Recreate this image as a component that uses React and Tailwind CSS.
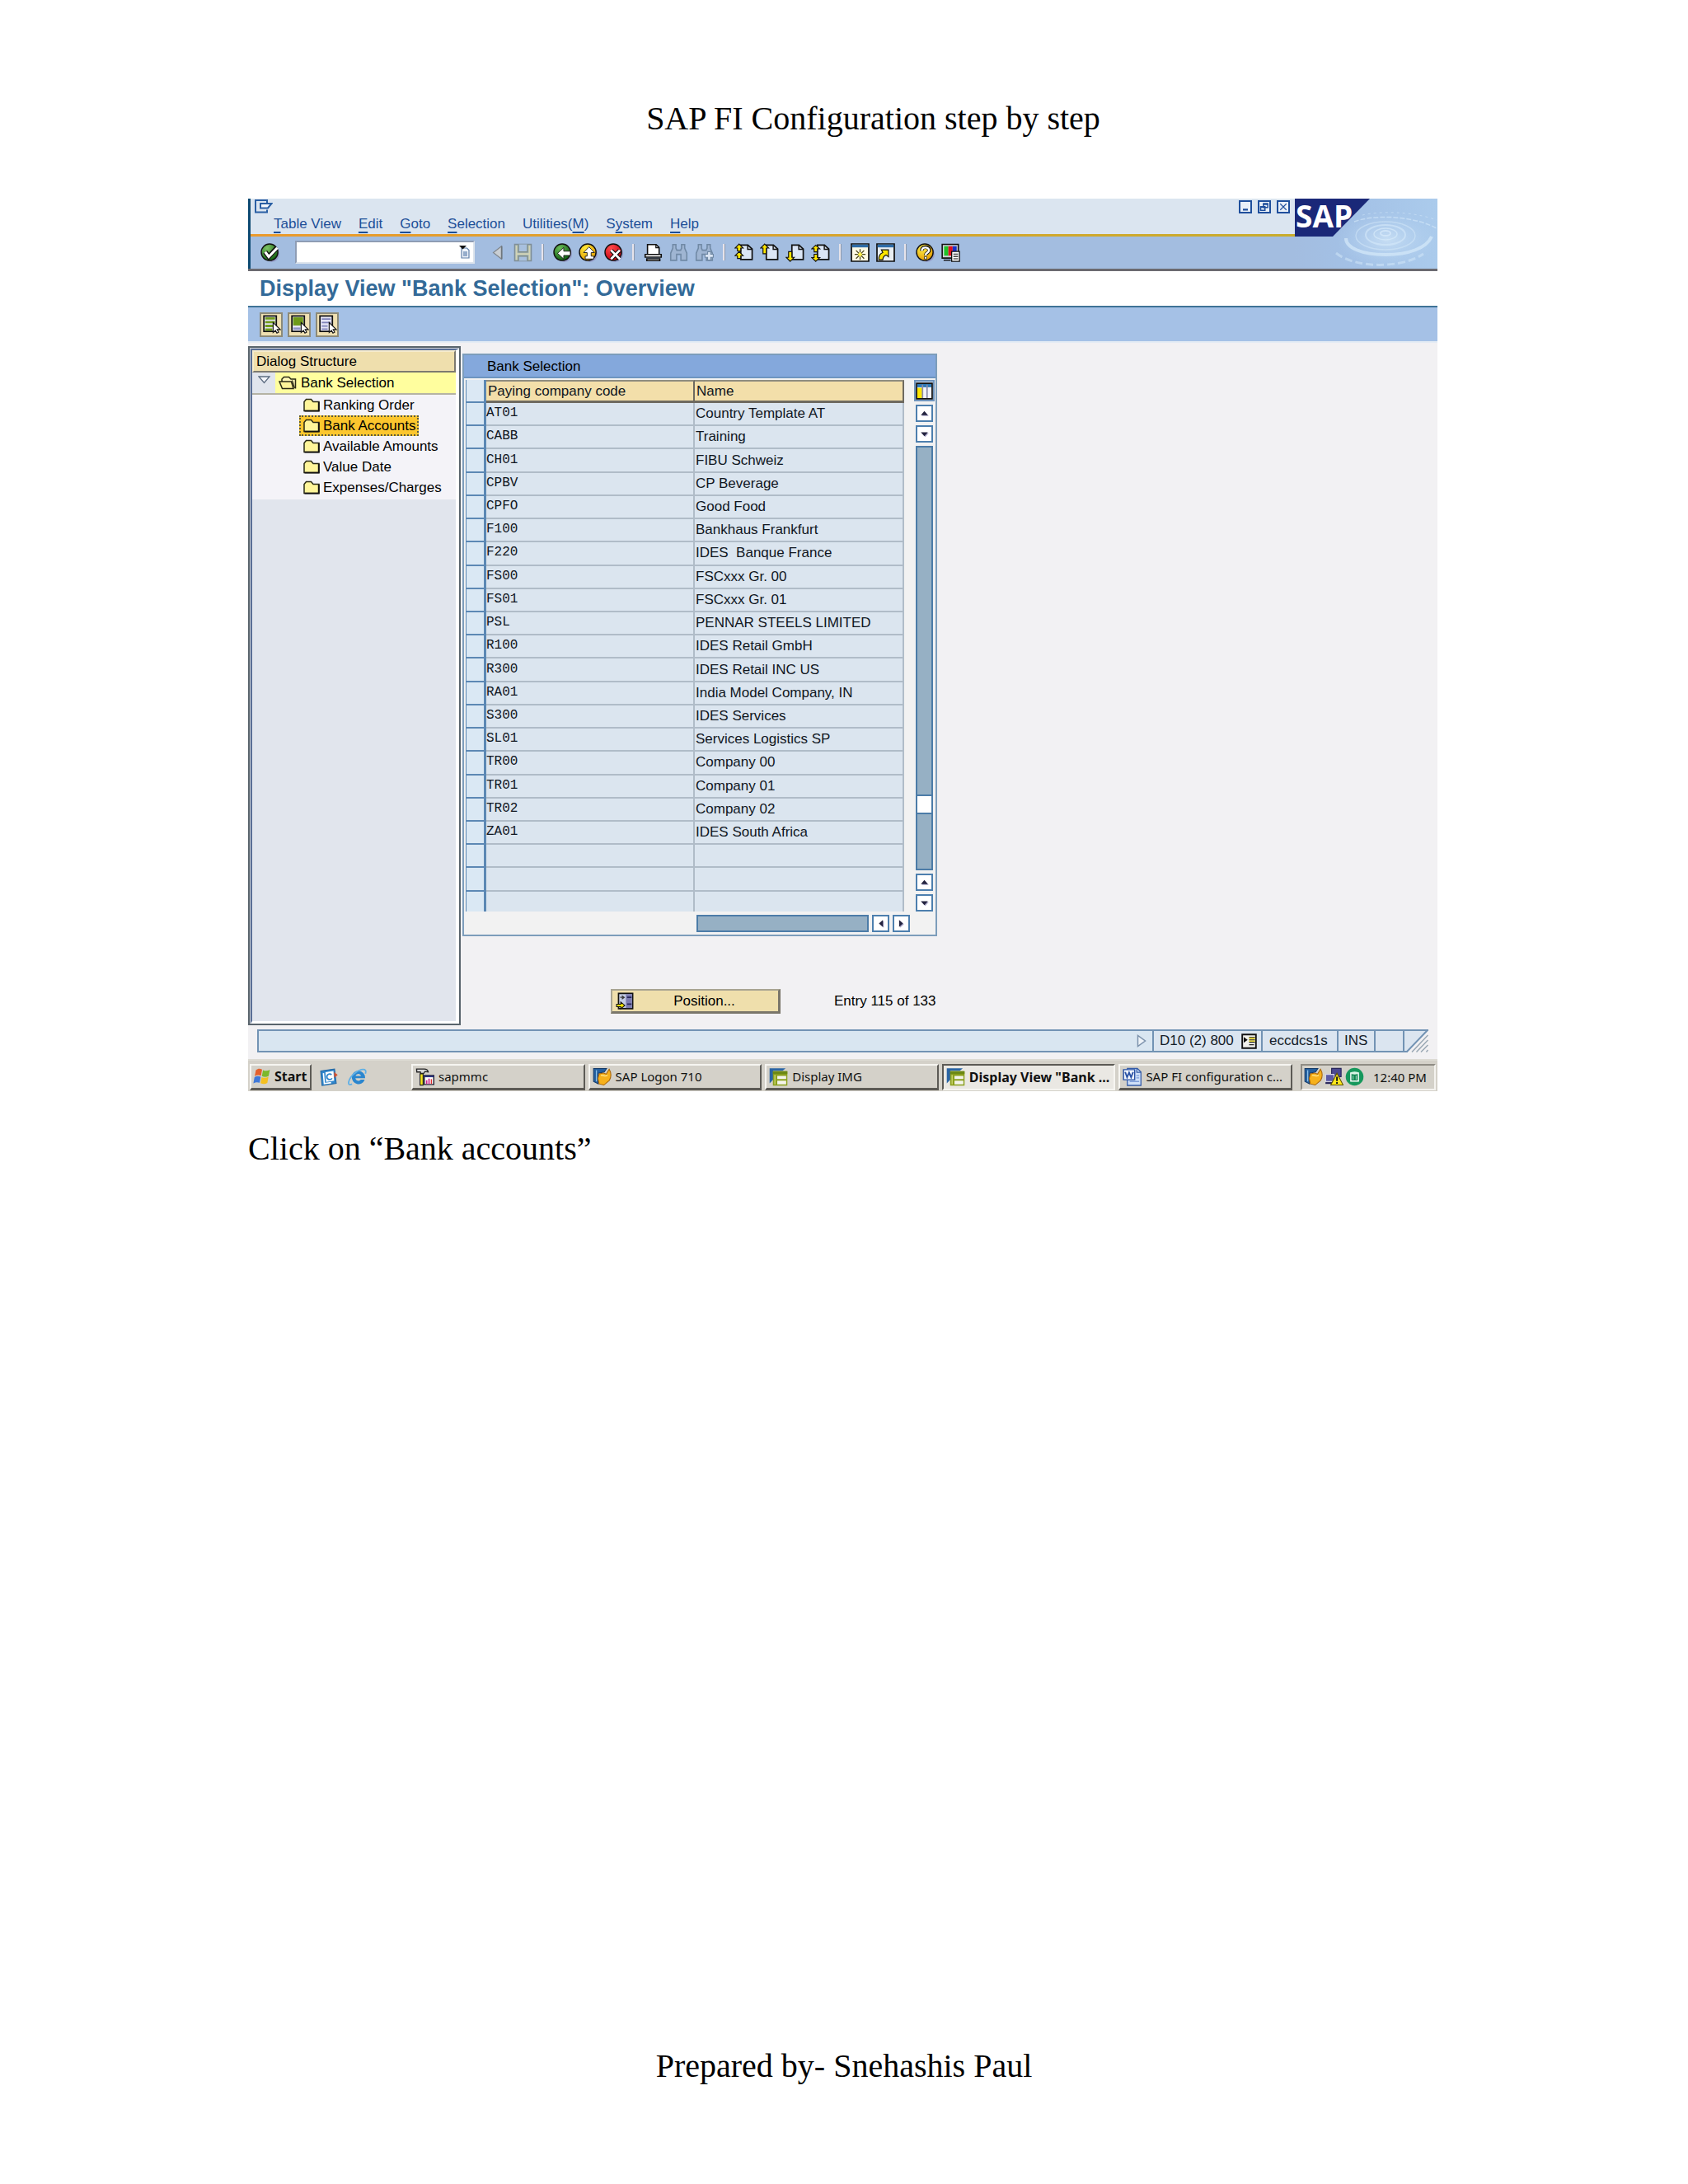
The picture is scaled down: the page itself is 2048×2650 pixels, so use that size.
import clsx from "clsx";

const rows = [
    ["AT01", "Country Template AT"],
    ["CABB", "Training"],
    ["CH01", "FIBU Schweiz"],
    ["CPBV", "CP Beverage"],
    ["CPFO", "Good Food"],
    ["F100", "Bankhaus Frankfurt"],
    ["F220", "IDES  Banque France"],
    ["FS00", "FSCxxx Gr. 00"],
    ["FS01", "FSCxxx Gr. 01"],
    ["PSL", "PENNAR STEELS LIMITED"],
    ["R100", "IDES Retail GmbH"],
    ["R300", "IDES Retail INC US"],
    ["RA01", "India Model Company, IN"],
    ["S300", "IDES Services"],
    ["SL01", "Services Logistics SP"],
    ["TR00", "Company 00"],
    ["TR01", "Company 01"],
    ["TR02", "Company 02"],
    ["ZA01", "IDES South Africa"],
    ["", ""],
    ["", ""],
    ["", ""],
];

// [text before the access key, access key, text after it]
const menus = [
    ["", "T", "able View"],
    ["", "E", "dit"],
    ["", "G", "oto"],
    ["", "S", "election"],
    ["Utilities(", "M", ")"],
    ["S", "y", "stem"],
    ["", "H", "elp"],
];

const treeItems = ["Ranking Order", "Bank Accounts", "Available Amounts", "Value Date", "Expenses/Charges"];

function Icon({ children, className = "size-[23px]" }) {
    return (
        <svg viewBox="0 0 16 16" className={clsx("block shrink-0", className)} fill="none" aria-hidden="true">
            {children}
        </svg>
    );
}

/* ---------- toolbar icons ---------- */

function Ball({ id, light, dark, children }) {
    return (
        <Icon>
            <defs>
                <radialGradient id={id} cx="0.35" cy="0.25" r="0.8">
                    <stop offset="0" stopColor={light} />
                    <stop offset="1" stopColor={dark} />
                </radialGradient>
            </defs>
            <ellipse cx="9.5" cy="9" rx="6.5" ry="7" fill="#8a86b8" opacity="0.6" />
            <circle cx="7.7" cy="7.7" r="7" fill={`url(#${id})`} stroke="#111" strokeWidth="1" />
            {children}
        </Icon>
    );
}

const EnterIcon = () => (
    <Ball id="enter" light="#7fc465" dark="#11600f">
        <path d="M4 7.5 7 11.5 13.5 4.2" stroke="#111" strokeWidth="4" />
        <path d="M4 7.5 7 11.5 14.2 4" stroke="#fff" strokeWidth="2.2" />
    </Ball>
);

const BackIcon = () => (
    <Ball id="back" light="#6bbb58" dark="#0d5c10">
        <path d="M3.8 8.6 9 3.8v3h5.6v3.6H9v3Z" fill="#fff" stroke="#111" strokeWidth="0.6" />
    </Ball>
);

const ExitIcon = () => (
    <Ball id="exit" light="#ffe93a" dark="#e09a00">
        <path d="M8.8 3.2 13.4 8H10.6v3h2.2v2.4H5.6V11h1.6V8H4.2Z" fill="#fff" stroke="#111" strokeWidth="0.6" />
    </Ball>
);

const CancelIcon = () => (
    <Ball id="cancel" light="#ff4a4a" dark="#c40010">
        <path d="M6 6.2 13 13.2M13 6.2 6 13.2" stroke="#111" strokeWidth="3.4" />
        <path d="M5.8 6 13.4 13.6M13.2 6 5.8 13.4" stroke="#fff" strokeWidth="1.9" />
    </Ball>
);

const PlayLeftIcon = () => (
    <Icon>
        <path d="M11.5 2.6v10.8L4.5 8Z" fill="#c9ced3" stroke="#7f868c" strokeWidth="0.8" />
        <path d="M11.6 2.6v10.8" stroke="#6f767c" strokeWidth="1.2" />
    </Icon>
);

const SaveIcon = () => (
    <Icon>
        <path d="M1 1h14v14H1Z" fill="#a9b8b8" stroke="#7f8e96" strokeWidth="1" />
        <path d="M4.2 1v6.5h7.6V1M4.2 15v-4h7.6v4" fill="#a8c0de" stroke="#808e88" strokeWidth="1" />
        <path d="M2.5 2v12M13.5 2v12M3 9.2h10" stroke="#d2d4b4" strokeWidth="1.2" />
    </Icon>
);

const PrintIcon = () => (
    <Icon>
        <path d="M3.2 9.5V1.2h7.3L13 3.7v5.8" fill="#fff" stroke="#111" strokeWidth="1.1" />
        <path d="M10.3 1.2v2.7H13" stroke="#111" strokeWidth="0.9" />
        <path d="M1.2 9.6h13.6v2.2H1.2ZM2.6 13.2h11v1.6h-11Z" fill="#fff" stroke="#111" strokeWidth="1.1" />
    </Icon>
);

const Binoculars = () => (
    <path
        d="M3 1.2h2.6v3L6.4 6h3.2l.8-1.8v-3H13v3l1.8 4.3v6h-5v-5H6.2v5h-5v-6L3 4.2Z"
        fill="#9fb5d2"
        stroke="#7089a5"
        strokeWidth="1.1"
    />
);

const FindIcon = () => (
    <Icon>
        <Binoculars />
    </Icon>
);

const FindNextIcon = () => (
    <Icon>
        <Binoculars />
        <path d="M8.6 9.4h2.2V7.2h2.6v2.2h2.2V12h-2.2v2.3h-2.6V12H8.6Z" fill="#dbe6f4" stroke="#7089a5" strokeWidth="0.8" />
    </Icon>
);

function PageIcon({ arrows }) {
    return (
        <Icon>
            <path d="M5.4 1.6h6L15 5v8.8H5.4Z" fill="#dbe6f6" stroke="#111" strokeWidth="1.2" />
            <path d="M11.2 1.6V5.2H15" stroke="#111" strokeWidth="1" />
            {arrows.map((d) => (
                <path key={d} d={d} fill="#ffe600" stroke="#111" strokeWidth="0.8" />
            ))}
        </Icon>
    );
}

const FirstPageIcon = () => (
    <PageIcon arrows={["M4 .8 7.4 4.2H5.4v2.4H2.6V4.2H.6Z", "M4 7.2 7.4 10.6H5.4V13H2.6v-2.4H.6Z"]} />
);
const PrevPageIcon = () => <PageIcon arrows={["M4 .8 7.4 4.2H5.4v4.8H2.6V4.2H.6Z"]} />;
const NextPageIcon = () => <PageIcon arrows={["M4 15.4 7.4 12H5.4V7.2H2.6V12H.6Z"]} />;
const LastPageIcon = () => (
    <PageIcon arrows={["M4 1.8 7.4 4.8H5.4v2.6H2.6V4.800H.6Z", "M4 15.4 7.4 12.2H5.4V9.4H2.6v2.8H.6Z"]} />
);

const SessionIcon = () => (
    <Icon>
        <path d="M.7.7h14.6v14.6H.7Z" fill="#fdfbe6" stroke="#111" strokeWidth="1.2" />
        <path d="M1.2 1.2h13.6v2.4H1.2Z" fill="#2e6ca8" />
        <path d="M8 5v9M3.4 9.5h9.2M4.6 6.2l6.8 6.8M11.4 6.2l-6.8 6.8" stroke="#4a4618" strokeWidth="0.9" />
        <path d="M8 7.4 10 9.5 8 11.6 6 9.5Z" fill="#fff04a" />
    </Icon>
);

const ShortcutIcon = () => (
    <Icon>
        <path d="M.7.7h14.6v14.6H.7Z" fill="#e9eef2" stroke="#111" strokeWidth="1.2" />
        <path d="M1.2 1.2h13.6v2.4H1.2Z" fill="#2e6ca8" />
        <path d="M2.2 14c0-4 1.4-5.4 3.4-6L4.4 5.6h6v6L8.400 10c-1.800.6-2.600 1.600-2.800 4Z" fill="#ffe600" stroke="#111" strokeWidth="0.8" />
    </Icon>
);

const HelpIcon = () => (
    <Ball id="help" light="#fff04a" dark="#e39a00">
        <path d="M5 6.4C5 2.400 11.400 2.600 11.400 6c0 2.200-3 2.200-3 4.200" stroke="#111" strokeWidth="3" />
        <path d="M5.200 6.400C5.200 2.800 11.200 3 11.200 6c0 2.200-2.900 2.200-2.900 4.200" stroke="#fff" strokeWidth="1.700" />
        <path d="M7.300 11.400h2v2h-2Z" fill="#fff" stroke="#111" strokeWidth="0.500" />
    </Ball>
);

const LayoutIcon = () => (
    <Icon>
        <path d="M.8 1h13.6v11.6H.8Z" fill="#ced3d8" stroke="#111" strokeWidth="1.1" />
        <path d="M2.4 2.6H6v8H2.400Z" fill="#1fc228" />
        <path d="M6 2.6h3.6v8H6Z" fill="#e01020" />
        <path d="M9.6 2.6H13v8H9.600Z" fill="#1830c8" />
        <path d="M2 14.4h6" stroke="#111" strokeWidth="1" />
        <path d="M8.800 7h6.600v8.400H8.800Z" fill="#fff" stroke="#111" strokeWidth="0.9" />
        <path d="M10.200 9.200h4M10.200 11.200h4M10.200 13.200h4" stroke="#111" strokeWidth="0.8" />
    </Icon>
);

/* ---------- application toolbar icons ---------- */

function ListIcon({ variant }) {
    return (
        <Icon>
            <path d="M1.5 1H12v13H1.500Z" fill="#e4e4f4" stroke="#111" strokeWidth="1.2" />
            {variant === "all" && (
                <path d="M2.600 3h8.300M2.600 6.200h8.300M2.600 9.400h8.300M2.600 12.400h6" stroke="#719b1c" strokeWidth="2" />
            )}
            {variant === "block" && (
                <>
                    <path d="M2.500 2H11v7H2.500Z" fill="#6f9a1a" />
                    <path d="M2.600 11.600h6" stroke="#8f92c4" strokeWidth="1.8" />
                </>
            )}
            {variant === "none" && (
                <path d="M3 3.500h7.600M3 6.500h7.600M3 9.500h5M3 12h5" stroke="#7f82b8" strokeWidth="1.2" />
            )}
            <path d="M9.300 6.500v8.400l1.900-1.800 1.300 2.300 1.400-.8-1.200-2.200h2.600Z" fill="#fff" stroke="#111" strokeWidth="0.8" />
        </Icon>
    );
}

const FolderIcon = () => (
    <svg viewBox="0 0 20 17" className="block h-[17px] w-5 shrink-0" aria-hidden="true">
        <path d="M1 15.5V4.500L3.500 1.500h6L12 4.500h7v11Z" fill="#fff59a" stroke="#2a2a14" strokeWidth="1.5" />
        <path d="M18.700 5v10.700H1.500" fill="none" stroke="#111" strokeWidth="1.8" />
    </svg>
);

const OpenFolderIcon = () => (
    <svg viewBox="0 0 22 17" className="block h-[17px] w-[22px] shrink-0" aria-hidden="true">
        <path d="M4 7V4L6.500 1.500h6L15 4h5.500v11.500" fill="#fff9b8" stroke="#2a2a14" strokeWidth="1.5" />
        <path d="M1 7h14.500l2.500 8.500H4.500Z" fill="#fff59a" stroke="#2a2a14" strokeWidth="1.5" />
        <path d="M16.500 5.500 19.500 15" stroke="#2a2a14" strokeWidth="1.2" />
    </svg>
);

/* ---------- taskbar icons ---------- */

const WindowsIcon = () => (
    <Icon className="size-[22px]">
        <path d="M2.500 2.500C4.500 1 6 1 8 2L7 7.400C5.200 6.600 3.500 6.600 1.500 7.800Z" fill="#e4602c" />
        <path d="M8.800 2.500c2 .9 4 .9 6-.3l-1 5.400c-2 1.200-4 1.100-6 .2Z" fill="#7cb82c" />
        <path d="M1.300 8.700c2-1.200 3.700-1.100 5.500-.3L5.800 13.700C4 12.900 2.300 13 .3 14.200Z" fill="#3f78d8" />
        <path d="M7.600 8.700c2 .9 4 .9 6-.3l-1 5.500c-2 1.200-4 1.100-6 .1Z" fill="#f4c020" />
    </Icon>
);

const OutlookIcon = () => (
    <Icon className="size-[22px]">
        <path d="M.8 2.500 13 .8l1.500 12.700L2 15.400Z" fill="#2f86cc" stroke="#2468a4" strokeWidth="0.8" />
        <path d="M5 3.600 12 2.600l.6 8.400-7 1.200Z" fill="#fff" />
        <path d="M10.400 5.800A2.500 2.500 0 1 0 10.800 9" stroke="#2f86cc" strokeWidth="1.3" />
        <path d="M3.200 4.500 4 13.600l6-.8" stroke="#fff" strokeWidth="1.2" />
        <path d="M12.600 3.500 15.800 6l-3 2.500Z" fill="#d8502c" />
    </Icon>
);

const ExplorerIcon = () => (
    <Icon className="size-6">
        <path d="M8.500 2.800a5.400 5.400 0 1 0 5.200 7.200h-3.200a2.500 2.500 0 0 1-4.400-1.200h7.900A5.500 5.500 0 0 0 8.500 2.800ZM6.200 7a2.400 2.400 0 0 1 4.600 0Z" fill="#2a86cf" />
        <path d="M3.400 13.600C-1.500 16 .5 8.500 6 4.500c4-3 10-4.500 8.200.7" stroke="#5fb0e6" strokeWidth="1.2" />
    </Icon>
);

const HammerIcon = () => (
    <Icon className="size-[23px]">
        <path d="M1 1.500h6.500c2 0 3 1 3.300 2.500L8 3.600 7 5.200H4.500L4.200 4 1.200 4Z" fill="#d8d8d8" stroke="#222" strokeWidth="0.9" />
        <path d="M3.900 5.500h2.600V15H3.900Z" fill="#f4e41c" stroke="#222" strokeWidth="0.8" />
        <path d="M7.500 7h8v7.500h-8Z" fill="#fff" stroke="#223" strokeWidth="1" />
        <path d="M7.500 7h8v1.400h-8Z" fill="#28307c" />
        <path d="M9.500 14v-3M11.500 14V9.500" stroke="#d02890" strokeWidth="1.2" />
        <path d="M13.500 14v-4" stroke="#e03030" strokeWidth="1" />
    </Icon>
);

const LogonIcon = () => (
    <Icon className="size-[23px]">
        <path d="M.8 1h11l-2 3-5 1v9L.8 12Z" fill="#245f9e" stroke="#143a68" strokeWidth="0.7" />
        <path d="M3.200 2.500v9.500" stroke="#8cc0e8" strokeWidth="0.9" />
        <path d="M5.500 5.500 9 4.800l2.500 1L14 1.500c1.600 2.800 2 6.300.2 9.500L9.500 15 5.500 14 4.500 9.500Z" fill="#f6b11c" stroke="#a86408" strokeWidth="0.7" />
        <path d="M7 6.800c2.500-.4 3.200 1.400 5.500 0" stroke="#fde080" strokeWidth="1.1" />
    </Icon>
);

const SessionWindowIcon = () => (
    <Icon className="size-[23px]">
        <path d="M.5.8H14L11.500 3h-8v7.500l-3 3Z" fill="#2a64a4" />
        <path d="M3.300 3.300h12.200v12.200H3.300Z" fill="#8ba01e" />
        <path d="M3.300 3.300h12.200v2.400H3.300Z" fill="#6c8814" />
        <path d="M7 7.300h7.500v2.600H7ZM7 11.300h7.500v3.200H7Z" fill="#f4f4ec" />
        <path d="M5 6.500v8" stroke="#c9d46c" strokeWidth="1" />
    </Icon>
);

const WordIcon = () => (
    <Icon className="size-[23px]">
        <path d="M4 1h8.500L15.500 4v11.300H4Z" fill="#cfe0f8" stroke="#345ca8" strokeWidth="0.9" />
        <path d="M12 1v3.300h3.400" stroke="#345ca8" strokeWidth="0.9" />
        <path d="M.8 2h9.400v8.500H.8Z" fill="#f4f8ff" stroke="#2a52a4" strokeWidth="1" />
        <path d="M2.200 4 3.800 8.500 5.500 4.500 7.200 8.500 8.900 4" stroke="#2a52a4" strokeWidth="1.3" />
        <path d="M11.500 7H14M11.500 9H14M6 12h8" stroke="#7c9cd8" strokeWidth="0.9" />
    </Icon>
);

const NetworkIcon = () => (
    <Icon className="size-[23px]">
        <path d="M6 1h8v7H6Z" fill="#4a4890" stroke="#28265c" strokeWidth="0.8" />
        <path d="M1 6h7v6H1Z" fill="#5c5aa4" stroke="#d8d8e8" strokeWidth="0.7" />
        <path d="M.8 13.300h6" stroke="#28265c" strokeWidth="1.5" />
        <path d="M10.500 5 15.700 15H5.300Z" fill="#ffe81c" stroke="#5c5200" strokeWidth="0.7" />
        <path d="M10.500 8v3.700M10.500 12.600v1.300" stroke="#111" strokeWidth="1.3" />
    </Icon>
);

const ServiceIcon = () => (
    <Icon className="size-[23px]">
        <circle cx="8" cy="8" r="7.500" fill="#16985c" />
        <path d="M4.800 4.800h6.400v6.800H4.800Z" stroke="#fff" strokeWidth="1" fill="#0f8450" />
        <ellipse cx="8" cy="4.800" rx="3.200" ry="1.200" fill="#d8f4e4" />
        <path d="M6.700 7v3.400M9.300 7v3.400" stroke="#8fd8b4" strokeWidth="0.8" />
    </Icon>
);

/* ---------- logo ---------- */

function Logo() {
    return (
        <svg viewBox="0 0 173 85" className="block h-[85px] w-[173px] shrink-0 overflow-visible" role="img" aria-label="SAP">
            <defs>
                <linearGradient id="water">
                    <stop offset="0" stopColor="#a3bde0" />
                    <stop offset="0.4" stopColor="#a3c1e6" />
                    <stop offset="1" stopColor="#abcbec" />
                </linearGradient>
                <radialGradient id="glow">
                    <stop offset="0" stopColor="#cfe4f7" stopOpacity="0.8" />
                    <stop offset="1" stopColor="#b4d2f0" stopOpacity="0" />
                </radialGradient>
            </defs>
            <rect width="173" height="85" fill="url(#water)" />
            <ellipse cx="112" cy="50" rx="61" ry="34" fill="url(#glow)" />
            <g fill="none" stroke="#d6e9fa">
                <ellipse cx="110" cy="42" rx="6" ry="3" strokeWidth="2" opacity="0.8" />
                <ellipse cx="110" cy="43" rx="14" ry="7" strokeWidth="1.5" opacity="0.7" />
                <ellipse cx="110" cy="44" rx="24" ry="12" strokeWidth="2" opacity="0.6" />
                <ellipse cx="110" cy="45" rx="36" ry="17" strokeWidth="1.5" opacity="0.5" />
                <path d="M62 48c0 12 20 20 48 20s50-8 56-22" strokeWidth="4" opacity="0.7" />
                <path d="M50 66c12 10 36 16 62 14 18-1 34-6 44-13" strokeWidth="3" strokeDasharray="9 4" opacity="0.5" />
                <path d="M72 28c20-8 68-9 100 8" strokeWidth="1.5" strokeDasharray="6 2" opacity="0.6" />
                <path d="M82 20c20-5 60-5 90 6" strokeWidth="1" strokeDasharray="3 4" opacity="0.5" />
            </g>
            <path d="M0 0h91L46 46H0Z" fill="#1a2878" />
            <text x="1" y="35" fill="#fff" className="font-['Open_Sans',sans-serif] text-[37px] font-bold">
                SAP
            </text>
        </svg>
    );
}

/* ---------- pieces ---------- */

function ToolButton({ label, children }) {
    return (
        <button type="button" aria-label={label} className="flex w-[31px] shrink-0 items-center justify-center">
            {children}
        </button>
    );
}

function Separator() {
    return (
        <div className="flex w-[17px] shrink-0 justify-center">
            <div className="h-5 w-[3px] border-r border-[#8d9aae] bg-[#e6e3ea]" />
        </div>
    );
}

const arrowPaths = {
    up: "M8 5.5 12 10H4Z",
    down: "M8 10.5 12 6H4Z",
    left: "M6 8l4.500-4v8Z",
    right: "M10 8 5.500 4v8Z",
};

function ArrowButton({ dir }) {
    return (
        <button
            type="button"
            aria-label={`Scroll ${dir}`}
            className="flex size-[21px] shrink-0 items-center justify-center border-2 border-[#4d7fae] bg-white"
        >
            <Icon className="size-[17px]">
                <path d={arrowPaths[dir]} fill="#a9a6c8" transform="translate(1 1)" />
                <path d={arrowPaths[dir]} fill="#23233f" />
            </Icon>
        </button>
    );
}

function TitleArea() {
    return (
        <div className="flex bg-[#a3bde0]">
            <div className="min-w-0 flex-1 border-l-[3px] border-[#0d4a72]">
                <div className="flex h-[43px] bg-[#dbe5f0]">
                    <div className="flex flex-1 flex-col">
                        <svg viewBox="0 0 22 17" className="ml-[5px] mt-px block h-[17px] w-[22px] shrink-0" fill="none" aria-hidden="true">
                            <path d="M15 4V1H1v14.500h14v-3" stroke="#2a5fa4" strokeWidth="2" />
                            <path d="M7 5h13.500L16 10.500H7Z" fill="#f4f8fc" stroke="#2a5fa4" strokeWidth="2" />
                        </svg>
                        <nav className="ml-7 flex gap-[21px] text-[17px] leading-[25px] text-[#1d4f98]">
                            {menus.map(([before, key, after]) => (
                                <button type="button" key={before + key + after} className="whitespace-nowrap">
                                    {before}
                                    <span className="underline decoration-2 underline-offset-4 [text-decoration-skip-ink:none]">
                                        {key}
                                    </span>
                                    {after}
                                </button>
                            ))}
                        </nav>
                    </div>
                    <div className="flex gap-[7px] pr-[6px] pt-[2px]">
                        <button type="button" aria-label="Minimize" className="size-4 border-2 border-[#1f4f9c] bg-[#e9f0f8]">
                            <Icon className="size-3">
                                <path d="M4 11h8v3H4Z" fill="#1f4f9c" />
                            </Icon>
                        </button>
                        <button type="button" aria-label="Restore" className="size-4 border-2 border-[#1f4f9c] bg-[#e9f0f8]">
                            <Icon className="size-3">
                                <path d="M6.500 3h7v6h-7ZM2 7.500h7v6H2Z" fill="#e9f0f8" stroke="#1f4f9c" strokeWidth="2" />
                                <path d="M6 3.500h8M2 8h7" stroke="#1f4f9c" strokeWidth="3" />
                            </Icon>
                        </button>
                        <button type="button" aria-label="Close" className="size-4 border-2 border-[#1f4f9c] bg-[#e9f0f8]">
                            <Icon className="size-3">
                                <path d="M3 3l10 10M13 3 3 13" stroke="#1f4f9c" strokeWidth="1.5" />
                            </Icon>
                        </button>
                    </div>
                </div>
                <div className="h-[3px] bg-linear-to-r from-[#eb9a2c] to-[#c8ac2c]" />
                <div className="flex h-[39px] items-center pb-px pl-2">
                    <ToolButton label="Enter">
                        <EnterIcon />
                    </ToolButton>
                    <div className="ml-[15px] mr-3 flex h-7 w-[218px] shrink-0 items-center border-2 border-t-[#8e9cb4] border-l-[#8e9cb4] border-b-[#dde4ec] border-r-[#dde4ec] bg-white pr-1">
                        <input aria-label="Command" className="min-w-0 flex-1 px-1 text-[17px] outline-none" />
                        <svg viewBox="0 0 13 16" className="h-4 w-[13px]" fill="none" aria-hidden="true">
                            <path d="M3 3h6.500L12 5.500V15H3Z" fill="#eef3fa" stroke="#5f7fa8" strokeWidth="1.2" />
                            <path d="M5 8h5M5 10h5M5 12h5" stroke="#3f679c" strokeWidth="1" />
                            <path d="M0 0h9L4.500 4.500Z" fill="#111" />
                        </svg>
                    </div>
                    <ToolButton label="Close command field"><PlayLeftIcon /></ToolButton>
                    <ToolButton label="Save"><SaveIcon /></ToolButton>
                    <Separator />
                    <ToolButton label="Back"><BackIcon /></ToolButton>
                    <ToolButton label="Exit"><ExitIcon /></ToolButton>
                    <ToolButton label="Cancel"><CancelIcon /></ToolButton>
                    <Separator />
                    <ToolButton label="Print"><PrintIcon /></ToolButton>
                    <ToolButton label="Find"><FindIcon /></ToolButton>
                    <ToolButton label="Find next"><FindNextIcon /></ToolButton>
                    <Separator />
                    <ToolButton label="First page"><FirstPageIcon /></ToolButton>
                    <ToolButton label="Previous page"><PrevPageIcon /></ToolButton>
                    <ToolButton label="Next page"><NextPageIcon /></ToolButton>
                    <ToolButton label="Last page"><LastPageIcon /></ToolButton>
                    <Separator />
                    <ToolButton label="New session"><SessionIcon /></ToolButton>
                    <ToolButton label="Create shortcut"><ShortcutIcon /></ToolButton>
                    <Separator />
                    <ToolButton label="Help"><HelpIcon /></ToolButton>
                    <ToolButton label="Customize layout"><LayoutIcon /></ToolButton>
                </div>
            </div>
            <Logo />
        </div>
    );
}

function DialogTree() {
    return (
        <aside className="flex w-[258px] shrink-0 flex-col border-2 border-[#59646c] bg-[#c8ccd2] pl-px pt-px">
            <div className="flex flex-1 flex-col border-b-[3px] border-l-2 border-r-4 border-t-2 border-b-white border-l-[#5a6f96] border-r-white border-t-[#5a6f96] bg-[#e1e5ed]">
                <div className="h-[27px] border-2 border-b-[#7d7a70] border-l-[#f6ecce] border-r-[#7d7a70] border-t-[#f6ecce] bg-[#efdfad] pl-[3px] text-[17px] leading-[23px]">
                    Dialog Structure
                </div>
                <div className="flex h-[27px] border-b-2 border-[#b5b3a4]">
                    <div className="flex w-7 justify-center pt-1">
                        <svg viewBox="0 0 15 10" className="h-[10px] w-[15px]" aria-hidden="true">
                            <path d="M1 1h13L7.500 8.500Z" fill="#f4f6fa" stroke="#5c6c80" strokeWidth="1.3" />
                        </svg>
                    </div>
                    <button type="button" className="flex flex-1 items-center gap-[5px] bg-[#fffe9e] pl-1 text-[17px] leading-6">
                        <OpenFolderIcon />
                        Bank Selection
                    </button>
                </div>
                <ul className="bg-[#f4f3f8] pb-[2px] text-[17px] leading-[21px]">
                    {treeItems.map((item) => (
                        <li key={item} className="pl-[57px]">
                            <button
                                type="button"
                                className={clsx(
                                    "flex h-[25px] items-center gap-1 border-2 border-dotted pl-[3px] pr-[2px]",
                                    item === "Bank Accounts" ? "border-[#5c5a3c] bg-[#fcc62e]" : "border-transparent"
                                )}
                            >
                                <FolderIcon />
                                {item}
                            </button>
                        </li>
                    ))}
                </ul>
            </div>
        </aside>
    );
}

function SelectionTable() {
    return (
        <section className="w-[576px] border-2 border-[#7d9dbb] bg-[#f2f2f2]">
            <h2 className="h-7 border-b-2 border-[#6d94c0] bg-[#84a8dc] pl-7 text-[17px] leading-7">Bank Selection</h2>
            <div className="flex pl-[2px] pt-[2px]">
                <table className="h-[645px] w-[532px] table-fixed border-separate border-spacing-0 text-left text-[17px] leading-5 text-[#10161e]">
                    <colgroup>
                        <col className="w-[25px]" />
                        <col className="w-[253px]" />
                        <col />
                    </colgroup>
                    <thead>
                        <tr className="h-7">
                            <td className="border-b-2 border-l border-r-[3px] border-[#5c88b4] bg-[#dbe8f4] p-0" />
                            <th scope="col" className="border-b-[3px] border-r-2 border-t-2 border-b-[#6e6a60] border-r-[#6e6a60] border-t-[#8f8c80] bg-[#f3dfaa] p-0 pl-[2px] font-normal">
                                Paying company code
                            </th>
                            <th scope="col" className="border-b-[3px] border-r-2 border-t-2 border-b-[#6e6a60] border-r-[#6e6a60] border-t-[#8f8c80] bg-[#f3dfaa] p-0 pl-[2px] font-normal">
                                Name
                            </th>
                        </tr>
                    </thead>
                    <tbody>
                        {rows.map(([code, name], i) => {
                            const last = i === rows.length - 1;
                            return (
                                <tr key={i} className={last ? "h-6" : "h-7"}>
                                    <td className={clsx("border-l border-r-[3px] border-[#5c88b4] bg-[#dae8f4] p-0", !last && "border-b-2")} />
                                    <td className={clsx("border-r-2 border-[#b0bcc8] bg-[#dbe5ef] p-0 pb-[2px] font-['Liberation_Mono',monospace] text-base leading-5", !last && "border-b-2")}>
                                        {code}
                                    </td>
                                    <td className={clsx("whitespace-pre border-r-2 border-[#b0bcc8] bg-[#dbe5ef] p-0 pl-px", !last && "border-b-2")}>
                                        {name}
                                    </td>
                                </tr>
                            );
                        })}
                    </tbody>
                </table>
                <div className="ml-3 flex w-[25px] flex-col items-center gap-1">
                    <button type="button" aria-label="Table settings" className="flex h-[26px] w-[25px] items-center justify-center border-2 border-[#6f94bc] bg-[#c4d3e6]">
                        <Icon className="size-[21px]">
                            <path d="M.8.8h14.4v14.4H.8Z" fill="#f4f4fa" stroke="#111" strokeWidth="1.3" />
                            <path d="M1.500 1.500h13v3h-13Z" fill="#2e7ab8" />
                            <path d="M1.500 5H6v9.500H1.500Z" fill="#ffe600" />
                            <path d="M6.300 2v12.500M10.500 2v12.500" stroke="#8a8aa4" strokeWidth="1.3" />
                        </Icon>
                    </button>
                    <ArrowButton dir="up" />
                    <ArrowButton dir="down" />
                    <div className="flex w-[21px] flex-1 flex-col border-2 border-[#4c7ca8] bg-[#96b0c4]">
                        <div className="mt-[421px] h-6 border-y-2 border-[#4c7ca8] bg-white" />
                    </div>
                    <ArrowButton dir="up" />
                    <ArrowButton dir="down" />
                </div>
            </div>
            <div className="flex justify-end gap-1 pb-[3px] pr-[31px] pt-1">
                <div className="h-[21px] w-[209px] border-2 border-[#4c7ca8] bg-[#96b0c4]" />
                <ArrowButton dir="left" />
                <ArrowButton dir="right" />
            </div>
        </section>
    );
}

function StatusBar() {
    return (
        <div className="ml-[11px] mr-[11px] mt-[5px] flex h-7 text-[17px] leading-6 text-[#141c28]">
            <div className="flex flex-1 items-center justify-end border-2 border-[#7293b4] bg-[#d9e6f1] pr-[7px]">
                <svg viewBox="0 0 12 16" className="h-4 w-3" aria-hidden="true">
                    <path d="M1.500 1.500v13L10.500 8Z" fill="#eef3f8" stroke="#7c92ac" strokeWidth="1.5" />
                </svg>
            </div>
            <div className="flex w-[132px] items-center justify-between border-y-2 border-r-2 border-[#7293b4] bg-[#dbe5f0] pl-[7px] pr-[5px]">
                D10 (2) 800
                <Icon className="size-[19px]">
                    <path d="M1 1h14v14H1Z" fill="#f2f2ee" stroke="#111" strokeWidth="1.6" />
                    <path d="M2.500 3.500v6L6.500 6.500Z" fill="#111" />
                    <path d="M8 3.500h6V6H8ZM8 7h6v2H8Z" fill="#f0e040" />
                    <path d="M8 4h6M8 6.500h6M8 9h6M8 11.500h5" stroke="#222" strokeWidth="1" />
                </Icon>
            </div>
            <div className="w-[92px] border-y-2 border-r-2 border-[#7293b4] bg-[#dbe5f0] pl-2">eccdcs1s</div>
            <div className="w-[45px] border-y-2 border-r-2 border-[#7293b4] bg-[#dbe5f0] pl-[7px]">INS</div>
            <div className="w-[35px] border-y-2 border-r-2 border-[#7293b4] bg-[#dbe5f0]" />
            <svg viewBox="0 0 29 28" className="h-7 w-[29px]" aria-hidden="true">
                <path d="M0 0h29L3 28H0Z" fill="#dbe5f0" />
                <path d="M0 1h29M0 27h4M28 1 3 27" stroke="#7293b4" strokeWidth="2" />
                <path d="M28.500 7 9 27.500M28.500 13 14.500 27.500M28.500 19 20 27.500M28.500 25l-2 2.500" stroke="#9aa8b4" strokeWidth="1.5" />
            </svg>
        </div>
    );
}

const tasks = [
    { title: "sapmmc", icon: <HammerIcon /> },
    { title: "SAP Logon 710", icon: <LogonIcon /> },
    { title: "Display IMG", icon: <SessionWindowIcon /> },
    { title: 'Display View "Bank ...', icon: <SessionWindowIcon />, active: true },
    { title: "SAP FI configuration c...", icon: <WordIcon /> },
];

function Taskbar() {
    return (
        <div className="mt-2 flex h-[39px] items-center border-t-2 border-[#dddbd4] bg-[#d4d1c9] pl-[2px] pr-[2px] pt-[2px] font-['Noto_Sans',sans-serif] text-[15px] leading-5 text-[#111]">
            <button type="button" className="flex h-8 w-[75px] shrink-0 items-center gap-1 border-2 border-b-[3px] border-b-[#5c5a55] border-l-[#f6f5f1] border-r-[#5c5a55] border-t-[#f6f5f1] pl-[2px] text-base font-bold">
                <WindowsIcon />
                Start
            </button>
            <div className="flex w-[121px] shrink-0 items-center gap-3 pl-[10px]">
                <button type="button" aria-label="Outlook"><OutlookIcon /></button>
                <button type="button" aria-label="Internet Explorer"><ExplorerIcon /></button>
            </div>
            <div className="flex min-w-0 flex-1 gap-1">
                {tasks.map((task) => (
                    <button
                        type="button"
                        key={task.title}
                        className={clsx(
                            "flex h-8 min-w-0 flex-1 items-center gap-[5px] whitespace-nowrap border-2 pl-[3px]",
                            task.active
                                ? "border-b-[#f6f5f1] border-l-[#5c5a55] border-r-[#f6f5f1] border-t-[#5c5a55] bg-[#eae8e3] text-base font-bold"
                                : "border-b-[3px] border-b-[#5c5a55] border-l-[#f6f5f1] border-r-[#5c5a55] border-t-[#f6f5f1]"
                        )}
                    >
                        {task.icon}
                        {task.title}
                    </button>
                ))}
            </div>
            <div className="ml-[10px] flex h-8 w-[164px] shrink-0 items-center gap-[2px] border-2 border-b-[#f4f3ef] border-l-[#8f8c84] border-r-[#f4f3ef] border-t-[#8f8c84] pl-[2px]">
                <LogonIcon />
                <NetworkIcon />
                <ServiceIcon />
                <span className="flex-1 text-center">12:40 PM</span>
            </div>
        </div>
    );
}

export default function App() {
    return (
        <div className="flex min-h-screen flex-col bg-white font-['Liberation_Serif',serif] text-[40px] leading-[48px] text-black">
            <div className="pl-[301px] pr-[304px]">
                <header className="pl-[74px] pt-[120px] text-center">SAP FI Configuration step by step</header>

                <main className="mt-[73px] bg-[#f2f1f3] font-['Liberation_Sans',sans-serif] text-[17px] leading-6">
                    <TitleArea />
                    <div className="border-t-[3px] border-[#6b6a70] bg-white">
                        <h1 className="h-[42px] pl-[14px] text-[27px] font-bold leading-[42px] text-[#336a98]">
                            Display View "Bank Selection": Overview
                        </h1>
                    </div>
                    <div className="border-b-2 border-t-2 border-b-[#e4ecf4] border-t-[#3f7396] bg-[#a5c1e6] pl-[14px]">
                        <div className="flex h-[41px] items-center gap-[6px]">
                            {["all", "block", "none"].map((variant) => (
                                <button
                                    type="button"
                                    key={variant}
                                    aria-label={`Select ${variant}`}
                                    className="flex h-[30px] w-7 items-center justify-center border-2 border-[#8c8a78] bg-[#efe0b2]"
                                >
                                    <ListIcon variant={variant} />
                                </button>
                            ))}
                        </div>
                    </div>

                    {/* Work area */}
                    <div className="flex pt-1">
                        <DialogTree />
                        <div className="pb-[14px] pl-[2px] pt-[9px]">
                            <SelectionTable />
                            <div className="mt-16 flex items-center">
                                <button
                                    type="button"
                                    className="ml-[180px] flex h-[30px] w-[206px] items-center border-2 border-b-[3px] border-r-[3px] border-b-[#7a766a] border-l-[#a8a492] border-r-[#7a766a] border-t-[#a8a492] bg-[#efdfac] pl-1"
                                >
                                    <Icon className="size-[22px]">
                                        <path d="M2.500 1H15v13.500H2.500Z" fill="#c4cce4" stroke="#111" strokeWidth="1.2" />
                                        <path d="M9 1.600h5.400v12.300H9Z" fill="#7c7cb0" />
                                        <path d="M10 4.500h4M10 10.500h4" stroke="#28285c" strokeWidth="1.2" />
                                        <path d="M4 4.500h3M5.500 3l2 1.500-2 1.500" stroke="#333" strokeWidth="0.9" />
                                        <path d="M.8 10.500h3.700V8.600l3.500 3-3.500 3v-1.900H.8Z" fill="#ffe600" stroke="#111" strokeWidth="0.8" />
                                    </Icon>
                                    <span className="flex-1 pr-1 text-center">Position...</span>
                                </button>
                                <span className="ml-[65px] whitespace-nowrap">Entry 115 of 133</span>
                            </div>
                        </div>
                    </div>

                    <StatusBar />
                    <Taskbar />
                </main>

                <p className="mt-[46px]">Click on “Bank accounts”</p>
            </div>

            <footer className="mt-auto pb-[119px] text-center">Prepared by- Snehashis Paul</footer>
        </div>
    );
}
